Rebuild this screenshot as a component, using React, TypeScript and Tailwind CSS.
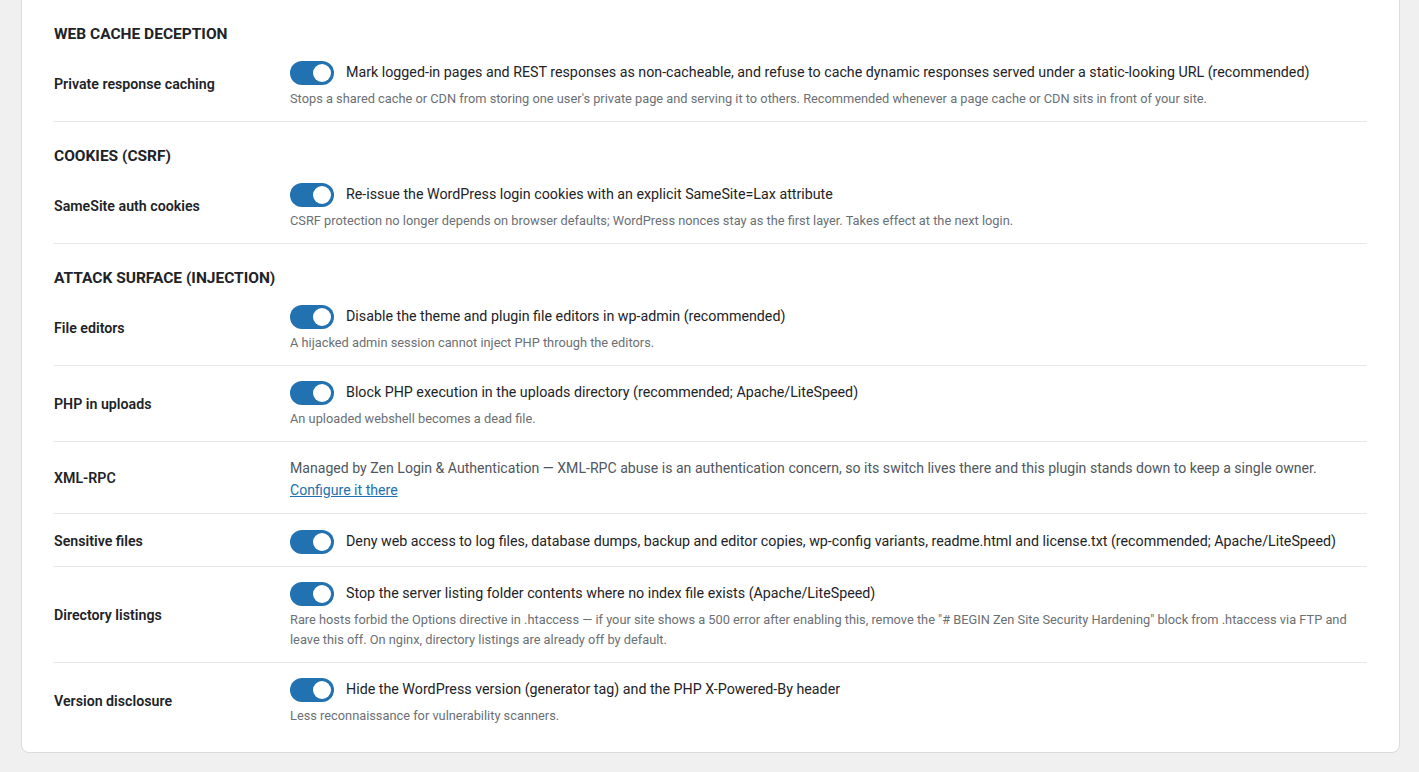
import React from "react";

type Row = {
  label: string;
  text?: string;
  desc?: string[];
  managed?: boolean;
};

type Section = {
  title: string;
  rows: Row[];
};

const sections: Section[] = [
  {
    title: "Web cache deception",
    rows: [
      {
        label: "Private response caching",
        text: "Mark logged-in pages and REST responses as non-cacheable, and refuse to cache dynamic responses served under a static-looking URL (recommended)",
        desc: [
          "Stops a shared cache or CDN from storing one user's private page and serving it to others. Recommended whenever a page cache or CDN sits in front of your site.",
        ],
      },
    ],
  },
  {
    title: "Cookies (CSRF)",
    rows: [
      {
        label: "SameSite auth cookies",
        text: "Re-issue the WordPress login cookies with an explicit SameSite=Lax attribute",
        desc: [
          "CSRF protection no longer depends on browser defaults; WordPress nonces stay as the first layer. Takes effect at the next login.",
        ],
      },
    ],
  },
  {
    title: "Attack surface (injection)",
    rows: [
      {
        label: "File editors",
        text: "Disable the theme and plugin file editors in wp-admin (recommended)",
        desc: ["A hijacked admin session cannot inject PHP through the editors."],
      },
      {
        label: "PHP in uploads",
        text: "Block PHP execution in the uploads directory (recommended; Apache/LiteSpeed)",
        desc: ["An uploaded webshell becomes a dead file."],
      },
      { label: "XML-RPC", managed: true },
      {
        label: "Sensitive files",
        text: "Deny web access to log files, database dumps, backup and editor copies, wp-config variants, readme.html and license.txt (recommended; Apache/LiteSpeed)",
      },
      {
        label: "Directory listings",
        text: "Stop the server listing folder contents where no index file exists (Apache/LiteSpeed)",
        desc: [
          'Rare hosts forbid the Options directive in .htaccess — if your site shows a 500 error after enabling this, remove the "# BEGIN Zen Site Security Hardening" block from .htaccess via FTP and',
          "leave this off. On nginx, directory listings are already off by default.",
        ],
      },
      {
        label: "Version disclosure",
        text: "Hide the WordPress version (generator tag) and the PHP X-Powered-By header",
        desc: ["Less reconnaissance for vulnerability scanners."],
      },
    ],
  },
];

function Toggle() {
  return (
    <span className="relative inline-flex h-6 w-11 shrink-0 items-center rounded-full bg-[#2271b1]">
      <span className="absolute right-[3px] h-[18px] w-[18px] rounded-full bg-white" />
    </span>
  );
}

function SettingRow({ row, last }: { row: Row; last: boolean }) {
  return (
    <div
      className={`flex items-center pt-[15px] ${
        last ? "pb-3" : "border-b border-[#e8e8ea] pb-3"
      } ${row.desc || row.managed ? "" : "min-h-[53px]"}`}
    >
      <div className="w-[236px] shrink-0 text-[14.2px] font-semibold text-[#1d2327]">
        {row.label}
      </div>
      <div className="min-w-0 flex-1">
        {row.managed ? (
          <div className="text-[14.1px] leading-[22px] text-[#50575e]">
            <div>
              Managed by Zen Login &amp; Authentication — XML-RPC abuse is an
              authentication concern, so its switch lives there and this plugin
              stands down to keep a single owner.
            </div>
            <a href="#" className="text-[#2271b1] underline">
              Configure it there
            </a>
          </div>
        ) : (
          <>
            <label className="flex h-6 items-center gap-3 text-[14.25px] text-[#1d2327]">
              <Toggle />
              <span>{row.text}</span>
            </label>
            {row.desc && (
              <div className="mt-1 text-[12.8px] leading-5 text-[#6b7075]">
                {row.desc.map((line) => (
                  <div key={line}>{line}</div>
                ))}
              </div>
            )}
          </>
        )}
      </div>
    </div>
  );
}

export default function App() {
  return (
    <div
      className="min-h-[772px] bg-[#f0f0f1] pb-5"
      style={{ fontFamily: '"Segoe UI", Roboto, "Open Sans", sans-serif' }}
    >
      <div className="-mt-[10px] ml-[21px] mr-[19px] rounded-lg border border-[#dcdcde] bg-white px-8 pt-8 pb-[14px]">
        {sections.map((section, si) => (
          <div
            key={section.title}
            className={si < sections.length - 1 ? "border-b border-[#e8e8ea]" : ""}
          >
            <h2
              className={`mb-px text-[15.5px] leading-[22px] font-bold uppercase text-[#1d2327] ${
                si === 0 ? "" : "pt-[23px]"
              }`}
            >
              {section.title}
            </h2>
            {section.rows.map((row, ri) => (
              <SettingRow key={row.label} row={row} last={ri === section.rows.length - 1} />
            ))}
          </div>
        ))}
      </div>
    </div>
  );
}
